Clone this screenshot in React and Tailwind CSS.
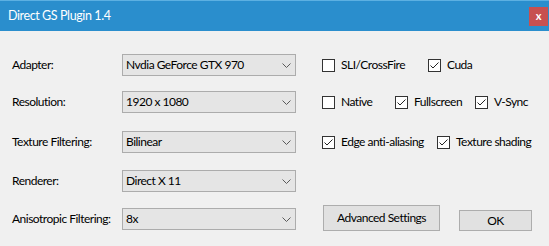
import React from "react";

const font = { fontFamily: "Lato, 'Noto Sans', sans-serif" };

function Chevron() {
  return (
    <svg width="9" height="5" viewBox="0 0 9 5" className="block">
      <polyline points="0.5,0.5 4.5,4.5 8.5,0.5" fill="none" stroke="#5a5a5a" strokeWidth="1" />
    </svg>
  );
}

function Combo({ value }) {
  return (
    <div className="w-[174px] h-[22px] bg-[#e5e5e5] border border-[#acacac] flex items-center justify-between pl-[3px] pr-[3px] text-[12px] tracking-[-0.5px] text-black">
      <span>{value}</span>
      <span className="pr-[1px]"><Chevron /></span>
    </div>
  );
}

function Check({ label, checked, w }) {
  return (
    <div className={`flex items-center ${w}`}>
      <div className="w-[13px] h-[13px] border border-[#333333] bg-white flex items-center justify-center shrink-0">
        {checked && (
          <svg width="11" height="11" viewBox="0 0 11 11">
            <polyline points="1.5,5.5 4,8 9.5,2.5" fill="none" stroke="#222" strokeWidth="1" />
          </svg>
        )}
      </div>
      <span className="ml-[6px] text-[12px] tracking-[-0.5px] text-black whitespace-nowrap">{label}</span>
    </div>
  );
}

function Row({ label, value, children, className = "" }) {
  return (
    <div className={`flex items-center pl-[12px] ${className}`}>
      <div className="w-[110px] text-[12px] tracking-[-0.5px] text-black">{label}</div>
      <Combo value={value} />
      <div className="ml-[26px] flex items-center">{children}</div>
    </div>
  );
}

export default function App() {
  return (
    <div className="w-[549px] h-[246px] bg-[#f0f0f0] flex flex-col overflow-hidden" style={font}>
      <div className="h-[31px] bg-[#2a8ecd] border-t border-[#5cb0e2] flex items-center justify-between">
        <span className="pl-[8px] text-white text-[12.5px] tracking-[-0.4px]">Direct GS Plugin 1.4</span>
        <div className="w-[19px] h-[19px] bg-[#c75050] mr-[1px] flex items-center justify-center text-white text-[11px] font-bold leading-none pb-[2px]">
          x
        </div>
      </div>
      <div className="flex flex-col">
        <Row label="Adapter:" value="Nvdia GeForce GTX 970" className="mt-[23px]">
          <Check label="SLI/CrossFire" w="w-[106px]" />
          <Check label="Cuda" checked />
        </Row>
        <Row label="Resolution:" value="1920 x 1080" className="mt-[15px]">
          <Check label="Native" w="w-[73px]" />
          <Check label="Fullscreen" checked w="w-[80px]" />
          <Check label="V-Sync" checked />
        </Row>
        <Row label="Texture Filtering:" value="Bilinear" className="mt-[18px]">
          <Check label="Edge anti-aliasing" checked w="w-[115px]" />
          <Check label="Texture shading" checked />
        </Row>
        <Row label="Renderer:" value="Direct X 11" className="mt-[17px]" />
        <div className="flex items-end pl-[12px] mt-[13px]">
          <div className="w-[110px] text-[12px] tracking-[-0.5px] text-black h-[22px] flex items-center">Anisotropic Filtering:</div>
          <Combo value="8x" />
          <button className="ml-[27px] w-[117px] h-[26px] bg-[#e1e1e1] border border-[#adadad] text-[12px] tracking-[-0.5px] text-black mb-[-1px]">
            Advanced Settings
          </button>
          <button className="ml-[19px] w-[73px] h-[21px] bg-[#e1e1e1] border border-[#adadad] text-[12px] tracking-[-0.5px] text-black mb-[-1px]">
            OK
          </button>
        </div>
      </div>
    </div>
  );
}
